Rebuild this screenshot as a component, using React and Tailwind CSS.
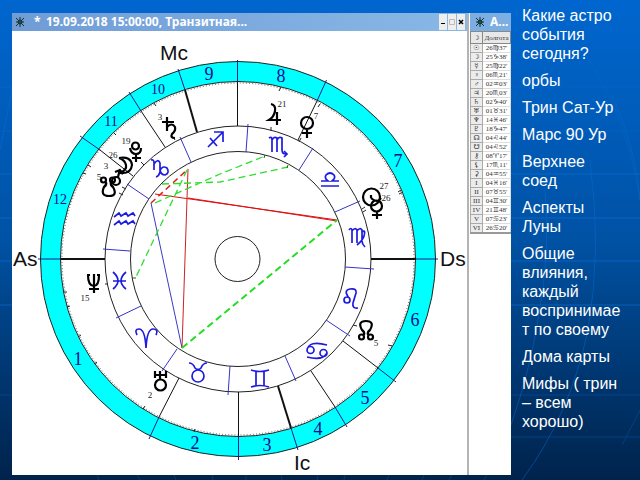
import React from 'react';

const SERIF = "font-['Liberation_Serif',serif]";

const NOTES = [
  'Какие астро события сегодня?',
  'орбы',
  'Трин Сат-Ур',
  'Марс 90 Ур',
  'Верхнее соед',
  'Аспекты Луны',
  'Общие влияния, каждый воспринимает по своему',
  'Дома карты',
  'Мифы ( трин – всем хорошо)',
];

const LONGITUDES = [
  ['☉', "26♍37'"],
  ['☽', "25♑38'"],
  ['☿', "25♍22'"],
  ['♀', "06♏21'"],
  ['♂', "02♒03'"],
  ['♃', "20♏03'"],
  ['♄', "02♑40'"],
  ['♅', "01♉31'"],
  ['♆', "14♓46'"],
  ['♇', "18♑47'"],
  ['☊', "04♌44'"],
  ['☋', "04♌52'"],
  ['⚷', "08♈17'"],
  ['⚸', "17♏11'"],
  ['⚳', "04♒55'"],
  ['I', "04♓16'"],
  ['II', "07♉55'"],
  ['III', "04♊30'"],
  ['IV', "21♊48'"],
  ['V', "07♋23'"],
  ['VI', "26♋20'"],
];

// Cusps: [outer point, inner edge of the cyan ring, outer edge of the zodiac, stroke width]
const CUSPS = [
  [178, 69, 185, 90, 197, 132, 2],
  [129, 92, 141, 111, 165, 147, 1],
  [80, 136, 100, 150, 133, 176, 1],
  [237.5, 60, 237.5, 82, 237.5, 126, 1],
  [326.5, 80, 317, 101, 298, 140, 1],
  [38, 259, 61, 259, 105, 259, 2],
  [438, 259, 416, 259, 371, 259, 2],
  [149, 439, 159, 417, 179, 378, 1],
  [238.5, 460, 238.5, 436, 238.5, 392, 1],
  [298, 450, 291, 428, 278, 386, 2],
  [347, 427, 335, 407, 311, 371, 1],
  [396, 382, 378, 368, 343, 341, 1],
];

const SIGN_LINES = [
  [180, 137, 191, 162],
  [248, 124, 246, 152],
  [313, 148, 299, 170],
  [360, 201, 335, 212],
  [374, 269, 345, 267],
  [350, 336, 326, 320],
  [296, 381, 285, 356],
  [228, 395, 230, 366],
  [162, 371, 177, 349],
  [116, 318, 141, 306],
  [103, 249, 130, 251],
  [127, 184, 149, 199],
];

const HOUSE_NUMBERS = [
  ['1', 78, 365], ['2', 195, 449], ['3', 267, 451], ['4', 318, 435],
  ['5', 365, 404], ['6', 415, 326], ['7', 398, 167], ['8', 281, 82],
  ['9', 209, 80], ['10', 158, 94], ['11', 111, 126], ['12', 60, 204],
];

const DEGREES = [
  ['3', 160, 120], ['19', 126, 144], ['26', 113, 158], ['3', 106, 169],
  ['5', 99, 180], ['21', 282, 107], ['7', 316, 119], ['27', 384, 189],
  ['26', 386, 201], ['15', 85, 301], ['2', 150, 398], ['5', 376, 346],
];

const SIGNS = [
  // Sagittarius
  'M208 147 L223 132 M214 132 H223 V142 M210 138 L217 146',
  // Scorpio
  'M269 138 Q272 136 272 140 V152 M272 140 Q274 136 277 138 V152 M277 140 Q279 136 282 138 V150 Q282 154 286 154 H287 M284 151 L287 154 L284 157',
  // Libra
  'M321 186 H339 M321 181 H328 Q324 178 326 175 Q330 171 334 175 Q336 178 332 181 H339',
  // Virgo
  'M349 230 Q351 227 352 230 V243 M352 231 Q355 227 357 230 V243 M357 231 Q360 227 362 230 V241 Q362 244 365 247 M362 232 Q366 229 364 236 Q363 240 357 245',
  // Leo
  'M347 297 A3 3 0 1 0 347 303 A3 3 0 1 0 347 297 M349 298 Q343 290 350 289 Q357 288 356 293 L353 303 Q352 309 358 308',
  // Cancer
  'M307 350 A3.500 3.500 0 1 0 314 350 A3.500 3.500 0 1 0 307 350 Q309 340 327 345 M327 353 A3.500 3.500 0 1 0 320 353 A3.500 3.500 0 1 0 327 353 Q323 361 307 357',
  // Gemini
  'M251 370 Q260 373 269 370 M251 387 Q260 384 269 387 M256 371 V386 M264 371 V386',
  // Taurus
  'M189 363 Q193 363 195 368 Q198 371 201 368 Q203 363 207 363 M192 376 A6 6 0 1 0 204 376 A6 6 0 1 0 192 376',
  // Aries
  'M137 335 Q134 329 139 329 Q145 329 146 348 Q147 329 153 329 Q159 329 156 335',
  // Pisces
  'M113 272 Q123 281 113 289 M126 272 Q116 281 126 289 M113 281 H126',
  // Aquarius
  'M114 217 L119 213 L121 216 L126 213 L128 216 L133 213 L135 216 M114 225 L119 221 L121 224 L126 221 L128 224 L133 221 L135 224',
  // Capricorn
  'M151 160 Q154 159 154 163 V170 M154 164 Q158 158 160 163 V172 Q159 176 156 177 M160 171 Q162 165 167 168 Q170 173 165 175 Q161 175 160 170',
];

const PLANETS = [
  // Saturn
  'M162 122 H174 M167 117 V131 M167 127 Q172 122 175 127 Q176 131 172 134 Q170 138 175 138',
  // Pluto
  'M130 148 Q131 154 136 154 Q141 154 141 148 M136 154 V162 M132 158 H141 M132 146 A3.5 3.5 0 1 0 139 146 A3.5 3.5 0 1 0 132 146',
  // Moon
  'M119 158 Q131 156 132 165 Q131 174 120 173 Q127 170 126 165 Q125 160 119 158',
  // Mars
  'M112 181 A4 4 0 1 0 120 181 A4 4 0 1 0 112 181 M118 177 L120 169 M115 172 L120 170 L123 174',
  // South node
  'M101 180 A2.5 2.5 0 1 0 106 180 A2.5 2.5 0 1 0 101 180 M110 180 A2.5 2.5 0 1 0 115 180 A2.5 2.5 0 1 0 110 180',
  'M106 182 Q107 185 104 187 Q100 196 109 196 Q118 196 113 187 Q110 185 111 182',
  // Jupiter
  'M271 104 Q276 105 275 111 Q274 117 269 120 H281 M277 112 V125',
  // Venus
  'M301 123 A6 6 0 1 0 313 123 A6 6 0 1 0 301 123 M307 129 V138 M302 133 H312',
  // Sun
  'M363 197 A8.5 8.5 0 1 0 380 197 A8.5 8.5 0 1 0 363 197 M371 195 V198',
  // Mercury
  'M371 206 A5.5 5.5 0 1 0 382 206 A5.5 5.5 0 1 0 371 206 M377 212 V219 M372 215 H382 M371 198 Q377 204 381 198',
  // North node
  'M359 337 A2.3 2.3 0 1 0 364 337 A2.3 2.3 0 1 0 359 337 M368 337 A2.3 2.3 0 1 0 373 337 A2.3 2.3 0 1 0 368 337',
  'M364 335 Q365 332 362 330 Q357 321 366 321 Q375 321 370 330 Q367 332 368 335',
  // Uranus
  'M155 371 V378 M166 371 V378 M155 375 H166 M160 371 V380 M155 385 A5.5 5.5 0 1 0 166 385 A5.5 5.5 0 1 0 155 385',
  // Neptune
  'M88 275 Q88 286 94 286 Q99 286 99 275 M94 274 V293 M89 289 H99 M87 275 H90 M97 275 H100',
];

const DEGREE_TICKS =
  'M154 103 L156 106 M113 132 L116 135 M281 87 L279 91 M320 104 L318 107 M83 173 L86 174 M88 165 L91 167 M63 292 H67 M67 307 L70 306 M78 337 L81 335 M94 364 L97 362 M143 409 L145 406 M194 432 L195 429 M399 194 L403 192 M398 192 L401 190 M388 345 L392 346 M271 127 V131 M301 138 L299 142 M362 209 L365 207 M363 212 L366 210 M105 284 H108 M119 193 L123 195 M122 187 L126 189 M141 162 L144 165 M175 140 L174 138 M353 325 L357 326';

function Backdrop() {
  return (
    <svg
      className="absolute inset-0 h-full w-full"
      viewBox="0 0 640 480"
      preserveAspectRatio="none"
      aria-hidden="true"
      fill="none"
      stroke="#0c6fd6"
    >
      <g opacity="0.3">
        <path d="M0 87H12M511 87H640M0 131H12M511 131H640M0 395H12M511 395H640M511 437H640" />
        <path d="M575 40Q625 105 640 200M640 410L622 445" />
        <path d="M97 475L99 480M137 475L140 480M174 475L176 480M212 475L213 480M246 475V480M281 475L282 480M318 475L317 480M345 475L344 480M389 475L387 480M424 475L422 480M452 475L449 480M487 475L484 480" />
      </g>
      <g opacity="0.65">
        <path d="M0 174H12M511 174H640M0 218H12M511 218H640M0 261H12M511 261H640M0 305H12M511 305H640" />
        <path
          d="M590 160Q602 250 588 330Q570 415 522 480M545 190Q551 250 538 320Q530 370 511 425M614 100Q636 150 640 200M0 150L12 90"
          opacity="0.7"
        />
      </g>
    </svg>
  );
}

function AppIcon() {
  return (
    <svg className="h-3 w-3 shrink-0" viewBox="0 0 12 12" fill="none" stroke="#12302f" aria-hidden="true">
      <path d="M2 2L10 10M10 2L2 10M6 1V11M2 6H10M2 10L4 8M10 10L8 8" />
      <circle cx="6" cy="6" r="2" fill="#1c5148" />
    </svg>
  );
}

function Wheel() {
  return (
    <svg className="block w-full" viewBox="12 31 455 444" role="img" aria-label="Транзитная карта">
      <circle cx="238" cy="259" r="187.5" fill="none" stroke="#00ffff" strokeWidth="20" />
      <g fill="none" stroke="#222222">
        <circle cx="238" cy="259" r="197.5" />
        <circle cx="238" cy="259" r="177.5" />
        <circle cx="238" cy="259" r="176" strokeDasharray="1 2.1" opacity="0.7" />
        <circle cx="238" cy="259" r="133" />
        <circle cx="238" cy="259" r="107.5" />
        <circle cx="237.5" cy="259" r="22.5" />
        <path d={DEGREE_TICKS} />
      </g>

      {CUSPS.map(([x1, y1, x2, y2, x3, y3, w]) => (
        <g key={`${x1}-${y1}`}>
          <line x1={x1} y1={y1} x2={x2} y2={y2} stroke="#1b1b90" />
          <line x1={x2} y1={y2} x2={x3} y2={y3} stroke="#111111" strokeWidth={w} />
        </g>
      ))}
      {SIGN_LINES.map(([x1, y1, x2, y2]) => (
        <line key={`${x1}-${y1}`} x1={x1} y1={y1} x2={x2} y2={y2} stroke="#3434c8" />
      ))}

      <g fill="none">
        <path d="M151 203L182 348" stroke="#3a3ac8" />
        <path d="M188 169L182 348" stroke="#cc2222" />
        <path d="M155 194L337 220M188 198L337 221" stroke="#dd1111" />
        <path d="M151 203L188 169" stroke="#dd2222" strokeWidth="1.5" strokeDasharray="6 4" />
        <g stroke="#2fdd2f" strokeWidth="1.3" strokeDasharray="7 4">
          <path d="M162 184L220 182L288 167M155 203L220 174L265 156M187 170L135 279" />
          <path d="M182 348L337 220" strokeWidth="2" stroke="#22dd22" />
        </g>
        <path d="M265 155L264 158M288 165L287 168M132 278H136" stroke="#226622" />
      </g>

      <g fill="none" stroke="#1c1ce0" strokeWidth="1.7">
        {SIGNS.map((d) => (
          <path key={d} d={d} />
        ))}
      </g>
      <g fill="none" stroke="#000000" strokeWidth="2.2">
        {PLANETS.map((d) => (
          <path key={d} d={d} />
        ))}
      </g>

      <g className={SERIF} fill="#0a0a8c" textAnchor="middle">
        {HOUSE_NUMBERS.map(([n, x, y]) => (
          <text key={n} x={x} y={y} className={n.length > 1 ? 'text-[14px]' : 'text-[18px]'}>
            {n}
          </text>
        ))}
      </g>
      <g className={`${SERIF} text-[9px]`} fill="#222222" textAnchor="middle">
        {DEGREES.map(([n, x, y]) => (
          <text key={`${x}-${y}`} x={x} y={y}>
            {n}
          </text>
        ))}
      </g>
      <g className="font-['Liberation_Sans',sans-serif] text-[21px]" fill="#111111">
        <text x="160" y="60">Mc</text>
        <text x="13" y="266">As</text>
        <text x="440" y="266">Ds</text>
        <text x="294" y="470">Ic</text>
      </g>
    </svg>
  );
}

function WindowButton({ label, children, dim }) {
  return (
    <button
      type="button"
      aria-label={label}
      className={`flex h-4 w-2 items-center justify-center bg-[#eeeeec] ${dim ? 'text-[#bbbbbb]' : 'text-black'}`}
    >
      <svg className="h-1.5 w-1.5 shrink-0" viewBox="0 0 6 6" fill="none" stroke="currentColor" aria-hidden="true">
        {children}
      </svg>
    </button>
  );
}

function ChartWindow() {
  return (
    <section className="min-w-0 flex-1">
      <header className="flex h-[18px] items-center bg-gradient-to-r from-[#709cd6] to-[#88b8e6] px-0.5 font-['Noto_Sans',sans-serif] text-xs font-bold text-white">
        <AppIcon />
        <span className="ml-2 w-3">*</span>
        <h1 className="min-w-0 flex-1 truncate">19.09.2018 15:00:00, Транзитная...</h1>
        <div className="flex gap-px">
          <WindowButton label="Свернуть">
            <path d="M1 4.500H5" />
          </WindowButton>
          <WindowButton label="Развернуть" dim>
            <path d="M0.500 0.500H5.500V5.500H0.500Z" />
          </WindowButton>
          <WindowButton label="Закрыть">
            <path d="M1 1L5 5M5 1L1 5" strokeWidth="1.500" />
          </WindowButton>
        </div>
      </header>
      <Wheel />
    </section>
  );
}

function LongitudeWindow() {
  return (
    <section className="w-[44px] shrink-0 border-l-2 border-[#b4b4b4] pl-px">
      <header className="flex h-[18px] items-center gap-1 bg-[#7caee2] pl-1 font-['Noto_Sans',sans-serif] text-xs font-bold text-white">
        <AppIcon />
        <h2 className="whitespace-nowrap">А...</h2>
      </header>
      <table className="w-full border-collapse border-b-2 border-[#999999] text-center font-['Liberation_Serif','DejaVu_Sans',serif] text-[7px] text-[#333333]">
        <thead>
          <tr className="h-[12px] bg-[#e8e8e8] leading-[10px]">
            <th className="w-3 border border-[#888888] p-0 font-normal">☽</th>
            <th className="border border-[#888888] p-0 font-normal">Долгота</th>
          </tr>
        </thead>
        <tbody>
          {LONGITUDES.map(([body, value]) => (
            <tr key={body} className="h-[9px] leading-[8px]">
              <th className="border border-[#aaaaaa] bg-[#ececec] p-0 font-normal">{body}</th>
              <td className="whitespace-nowrap border border-[#dddddd] p-0">{value}</td>
            </tr>
          ))}
        </tbody>
      </table>
    </section>
  );
}

export default function App() {
  return (
    <main className="relative min-h-screen overflow-hidden bg-gradient-to-b from-[#0066cf] via-[#0052a4] to-[#00234c] font-['Liberation_Sans',sans-serif]">
      <Backdrop />
      <div className="relative flex items-start pl-3">
        <div className="mt-[13px] flex min-w-0 flex-1 bg-white">
          <ChartWindow />
          <LongitudeWindow />
        </div>
        <aside className="w-[129px] shrink-0 space-y-2 pl-[11px] pr-4 pt-1.5 text-base leading-[19px] text-white">
          {NOTES.map((note) => (
            <p key={note} className="break-words">
              {note}
            </p>
          ))}
        </aside>
      </div>
    </main>
  );
}
